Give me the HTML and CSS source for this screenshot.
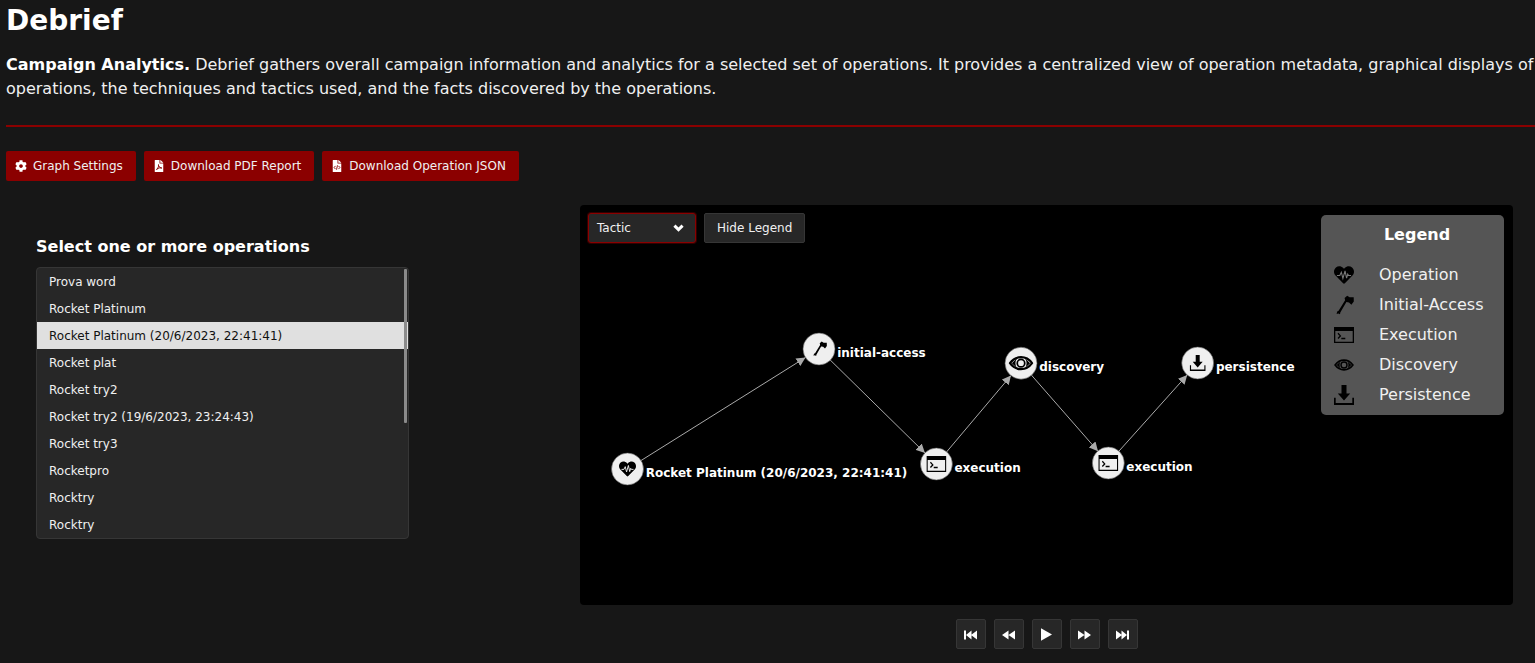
FILE: index.html
```html
<!DOCTYPE html>
<html lang="en">
<head>
<meta charset="utf-8">
<title>Debrief</title>
<link rel="stylesheet" href="styles.css">
</head>
<body>
<svg class="defs" aria-hidden="true">
  <symbol id="i-heart" viewBox="0 0 512 512">
    <path d="M462.300 62.600C407.500 15.900 326 24.300 275.700 76.200L256 96.500l-19.700-20.300C186.100 24.300 104.500 15.900 49.700 62.600c-62.800 53.600-66.100 149.800-9.900 207.900l193.500 199.800c12.500 12.900 32.800 12.900 45.300 0l193.500-199.800c56.300-58.100 53-154.300-9.800-207.900z"/>
    <path class="pulse" d="M75 268H148L188 185 228 345 283 150 322 335 352 235 372 268H437"/>
  </symbol>
  <symbol id="i-axe" viewBox="0 0 20 20">
    <path d="M10.600 3 13.200 .8 15.600 2.200 19.700 2.300 19.800 6.500 17.400 9.700 15 7.500 12.400 7 6.300 17.600 6 19.200 4.400 18.500 2.600 18.900 3.200 16.500 4.600 15.800 11.100 5.200Z"/>
  </symbol>
  <symbol id="i-terminal" viewBox="0 0 20 16">
    <path fill-rule="evenodd" d="M0 0H20V16H0ZM1.300 4V14.700H18.700V4Z"/>
    <path class="line" d="M4 6.300 6.400 8.900 4 11.500M7.300 11.500H11.300"/>
  </symbol>
  <symbol id="i-eye" viewBox="0 0 26 16">
    <path class="eye" d="M1.500 8C7.500-.3 18.500-.3 24.500 8 18.500 16.300 7.500 16.300 1.500 8Z"/>
    <circle class="ring" cx="13" cy="8" r="3.900"/>
    <path d="M8.700 3Q5.700 8 8.700 13L3.500 8ZM17.300 3Q20.300 8 17.300 13L22.500 8Z"/>
  </symbol>
  <symbol id="i-save" viewBox="0 0 20 20">
    <path d="M7.500 0H12.500V8.500H16.200L10 15.500 3.800 8.500H7.500ZM0 12.700H1.700V18H18.300V12.700H20V20H0Z"/>
  </symbol>
  <symbol id="i-cog" viewBox="0 0 512 512">
    <path d="M487.400 315.700l-42.600-24.600c4.300-23.200 4.300-47 0-70.200l42.600-24.600c4.900-2.800 7.100-8.600 5.500-14-11.100-35.600-30-67.800-54.700-94.600-3.800-4.100-10-5.100-14.800-2.300L380.800 110c-17.900-15.400-38.500-27.300-60.800-35.100V25.800c0-5.600-3.900-10.500-9.400-11.700-36.700-8.200-74.300-7.800-109.200 0-5.500 1.200-9.400 6.100-9.400 11.700V75c-22.200 7.900-42.800 19.800-60.800 35.100L88.700 85.500c-4.900-2.800-11-1.900-14.800 2.300-24.700 26.700-43.600 58.900-54.700 94.600-1.700 5.400.6 11.200 5.500 14L67.300 221c-4.300 23.200-4.300 47 0 70.200l-42.600 24.600c-4.900 2.800-7.100 8.600-5.500 14 11.100 35.600 30 67.800 54.700 94.600 3.800 4.100 10 5.100 14.800 2.300l42.600-24.600c17.900 15.400 38.500 27.300 60.800 35.100v49.200c0 5.600 3.900 10.500 9.400 11.700 36.700 8.200 74.300 7.800 109.200 0 5.500-1.200 9.400-6.100 9.400-11.700v-49.200c22.200-7.900 42.800-19.800 60.800-35.100l42.600 24.600c4.900 2.800 11 1.900 14.800-2.300 24.700-26.700 43.600-58.900 54.700-94.600 1.500-5.500-.7-11.300-5.600-14.100zM256 336c-44.100 0-80-35.900-80-80s35.900-80 80-80 80 35.900 80 80-35.900 80-80 80z"/>
  </symbol>
  <symbol id="i-page" viewBox="0 0 9 12">
    <path d="M.6 0H5V3.400H9V11.400Q9 12 8.400 12H.6Q0 12 0 11.400V.6Q0 0 .6 0ZM5.800 0H6L9 2.700H5.800Z"/>
  </symbol>
</svg>

<header class="intro">
  <h2 class="title">Debrief</h2>
  <p class="lead"><b>Campaign Analytics.</b> Debrief gathers overall campaign information and analytics for a selected set of operations. It provides a centralized view of operation metadata, graphical displays of operations, the techniques and tactics used, and the facts discovered by the operations.</p>
</header>
<hr class="rule">

<div class="actions">
  <button class="btn primary"><svg class="cog"><use href="#i-cog"/></svg>Graph Settings</button>
  <button class="btn primary file"><svg class="page" viewBox="0 0 9 12"><use href="#i-page" width="9" height="12"/><path class="mark" d="M4 4.300Q4.900 6.700 1.900 10M4.100 5.500Q5 8.200 7.500 8.300M2.400 9Q4.500 7.600 7.200 7.700"/></svg>Download PDF Report</button>
  <button class="btn primary file"><svg class="page" viewBox="0 0 9 12"><use href="#i-page" width="9" height="12"/><path class="mark" d="M3 5.900 1.600 7.500 3 9.100M6 5.900 7.400 7.500 6 9.100M5 5.300 4 9.700"/></svg>Download Operation JSON</button>
</div>

<main class="columns">
  <section class="picker">
    <h3 class="label">Select one or more operations</h3>
    <div class="listbox">
      <ul class="options">
        <li>Prova word</li>
        <li>Rocket Platinum</li>
        <li class="selected">Rocket Platinum (20/6/2023, 22:41:41)</li>
        <li>Rocket plat</li>
        <li>Rocket try2</li>
        <li>Rocket try2 (19/6/2023, 23:24:43)</li>
        <li>Rocket try3</li>
        <li>Rocketpro</li>
        <li>Rocktry</li>
        <li>Rocktry</li>
      </ul>
      <span class="thumb"></span>
    </div>
  </section>

  <section class="viewer">
    <div class="stage">
      <svg class="graph" viewBox="0 0 933 400">
        <defs>
          <marker id="arrow" viewBox="0 -5 10 10" refX="10" refY="0" markerWidth="9" markerHeight="9" markerUnits="userSpaceOnUse" orient="auto"><path d="M0-5 10 0 0 5Z"/></marker>
        </defs>
        <g class="edges">
          <path d="M47.500 264 225.500 152.500"/>
          <path d="M239 144 345 248"/>
          <path d="M356.400 259 431 170.500"/>
          <path d="M441 158.200 518 246.200"/>
          <path d="M528.300 258 607.200 170"/>
        </g>
        <g class="nodes">
          <g transform="translate(47.500 264)"><circle r="16"/><use href="#i-heart" x="-8.500" y="-8.500" width="17" height="17"/><text x="18.200" y="7.600">Rocket Platinum (20/6/2023, 22:41:41)</text></g>
          <g transform="translate(239 144)"><circle r="16"/><use href="#i-axe" x="-7.500" y="-8" width="15.500" height="15.500"/><text x="18.200" y="7.600">initial-access</text></g>
          <g transform="translate(356.400 259)"><circle r="16"/><use href="#i-terminal" x="-10" y="-8" width="20" height="16"/><text x="18" y="7.600">execution</text></g>
          <g transform="translate(441 158.200)"><circle r="16"/><use href="#i-eye" x="-12.500" y="-7.700" width="25" height="15.400"/><text x="18.200" y="7.600">discovery</text></g>
          <g transform="translate(528.300 258)"><circle r="16"/><use href="#i-terminal" x="-10" y="-8" width="20" height="16"/><text x="18" y="7.600">execution</text></g>
          <g transform="translate(617.700 158)"><circle r="16"/><use href="#i-save" x="-8" y="-8" width="16" height="16"/><text x="18.200" y="7.600">persistence</text></g>
        </g>
      </svg>
      <div class="tools">
        <div class="select">Tactic<svg class="chevron" viewBox="0 0 10 7"><path d="M1.300 1.300 5 5 8.700 1.300"/></svg></div>
        <button class="btn dark">Hide Legend</button>
      </div>
      <aside class="legend">
        <h4>Legend</h4>
        <div class="row"><svg><use href="#i-heart"/></svg><span>Operation</span></div>
        <div class="row"><svg><use href="#i-axe"/></svg><span>Initial-Access</span></div>
        <div class="row"><svg><use href="#i-terminal"/></svg><span>Execution</span></div>
        <div class="row"><svg><use href="#i-eye"/></svg><span>Discovery</span></div>
        <div class="row"><svg><use href="#i-save"/></svg><span>Persistence</span></div>
      </aside>
    </div>
    <div class="player">
      <button class="btn dark square" aria-label="First"><svg viewBox="0 0 13 10"><path d="M0 .5H2V9.500H0ZM7.500.5V9.500L2 5ZM13 .5V9.500L7 5Z"/></svg></button>
      <button class="btn dark square" aria-label="Back"><svg viewBox="0 0 13 10"><path d="M6.500.5V9.500L0 5ZM13 .5V9.500L6.500 5Z"/></svg></button>
      <button class="btn dark square" aria-label="Play"><svg class="play" viewBox="0 0 11 13"><path d="M0 .3 11 6.500 0 12.700Z"/></svg></button>
      <button class="btn dark square" aria-label="Forward"><svg viewBox="0 0 13 10"><path d="M0 .5V9.500L6.500 5ZM6.500.5V9.500L13 5Z"/></svg></button>
      <button class="btn dark square" aria-label="Last"><svg viewBox="0 0 13 10"><path d="M0 .5V9.500L6 5ZM5.500.5V9.500L11 5ZM11 .5H13V9.500H11Z"/></svg></button>
    </div>
  </section>
</main>
</body>
</html>
```

FILE: styles.css
```css
* { box-sizing: border-box; }
html { overflow: hidden; background: #171717; }
body {
  margin: 0;
  padding: 5px 0 0 6px;
  height: 663px;
  background: #171717;
  color: #f0f0f0;
  font: 16px/24px "DejaVu Sans", sans-serif;
}
.defs { position: absolute; width: 0; height: 0; }
h2, h3, h4, p, ul { margin: 0; padding: 0; }

.title { font-size: 28px; line-height: 32px; color: #fff; }
.lead { margin-top: 16px; }
.lead b { color: #fff; }
.rule { height: 2px; margin: 24px 0 24px; border: 0; background: #8b0000; }

.actions { display: flex; gap: 8px; }
.btn {
  display: flex;
  align-items: center;
  justify-content: center;
  height: 30px;
  padding: 0 12px;
  border: 1px solid transparent;
  border-radius: 2px;
  color: #f0f0f0;
  font: 12px/18px "DejaVu Sans", sans-serif;
  white-space: nowrap;
}
.primary { background: #8b0000; padding: 0 12px 0 8px; }
.primary svg { fill: #fff; flex: none; }
.cog { width: 12px; height: 12px; margin-right: 6px; }
.file { padding-left: 9px; }
.page { width: 10px; height: 12px; margin-right: 7px; }
.page .mark { fill: none; stroke: #8b0000; stroke-width: .9; }
.dark { background: #272727; border-color: #363636; }

.columns { display: flex; margin-top: 24px; }
.picker { width: 373px; margin: 30px 171px 0 30px; }
.label { font-size: 16px; color: #fff; }
.listbox {
  position: relative;
  height: 272px;
  margin-top: 8px;
  border: 1px solid #363636;
  border-radius: 4px;
  background: #272727;
  overflow: hidden;
}
.options { list-style: none; font-size: 12px; }
.options li { height: 27px; padding: 1px 0 0 12px; line-height: 27px; }
.options .selected { background: #e0e0e0; color: #111; }
.thumb { position: absolute; right: 1px; top: 1px; width: 3px; height: 154px; background: #8b8b8b; border-radius: 1px; }

.viewer { width: 933px; }
.stage { position: relative; height: 400px; border-radius: 4px; background: #000; overflow: hidden; }
.graph { display: block; width: 933px; height: 400px; }
.tools { position: absolute; left: 8px; top: 8px; display: flex; gap: 8px; }
.select {
  display: flex;
  align-items: center;
  justify-content: space-between;
  width: 108px;
  height: 30px;
  padding: 0 11px 0 8px;
  border: 1px solid #8b0000;
  border-radius: 3px;
  box-shadow: 0 0 0 1px rgba(139, 0, 0, .35);
  background: #272727;
  font-size: 12px;
}
.chevron { width: 11px; height: 8px; margin-top: -1px; fill: none; stroke: #fff; stroke-width: 2.7; }

.edges path { stroke: #aaa; stroke-width: 1; marker-end: url(#arrow); }
#arrow path { fill: #aaa; }
.nodes { --pulse: #efefef; }
.nodes circle { fill: #efefef; stroke: #555; stroke-width: .6; }
.nodes text { fill: #fff; font-size: 12px; font-weight: bold; }
.line { fill: none; stroke: #000; stroke-width: 1.3; }
.pulse { fill: none; stroke: var(--pulse); stroke-width: 28; }
.eye { fill: none; stroke: #000; stroke-width: 2.3; }
.ring { fill: none; stroke: #000; stroke-width: 1.8; }

.legend {
  --pulse: #777;
  position: absolute;
  right: 9px;
  top: 10px;
  width: 183px;
  height: 200px;
  padding: 8px 0 0 13px;
  border-radius: 5px;
  background: #555;
}
.legend h4 { margin: 0 0 13px -4px; text-align: center; font-size: 16px; color: #fff; }
.row { display: flex; align-items: center; height: 30px; gap: 25px; color: #f0f0f0; }
.row svg { width: 20px; height: 20px; }

.player { display: flex; gap: 8px; margin: 14px 0 0 376px; }
.square { width: 30px; padding: 0 2px 0 0; }
.square svg { width: 13px; height: 10px; margin-top: 1px; fill: #fff; }
.square .play { width: 11px; height: 13px; }
```
